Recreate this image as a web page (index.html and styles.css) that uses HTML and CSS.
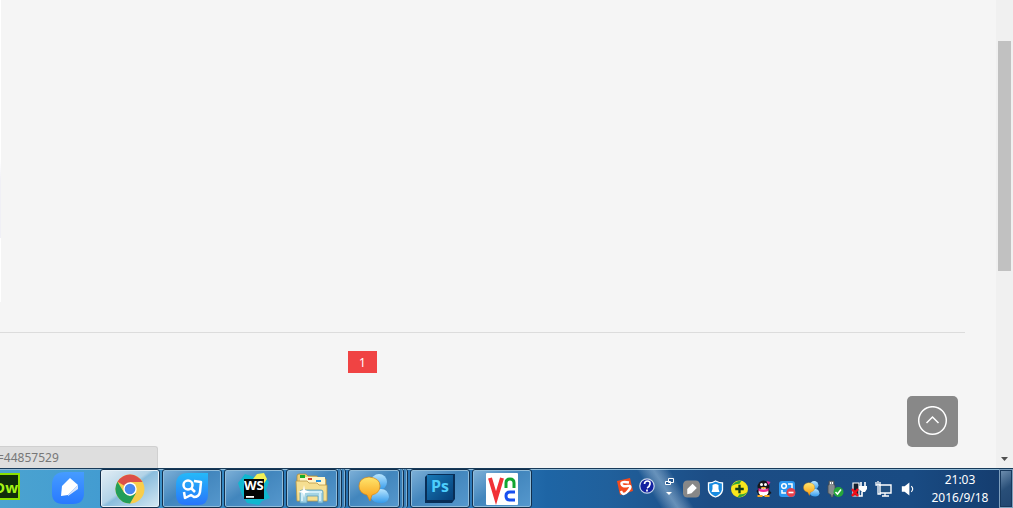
FILE: index.html
```html
<!DOCTYPE html>
<html lang="en">
<head>
<meta charset="utf-8">
<title>Desktop</title>
<link rel="stylesheet" href="styles.css">
</head>
<body>
<div class="viewport">
  <main class="page">
    <div class="edge"></div>
    <section class="list"></section>
    <nav class="pager" aria-label="Pages"><a class="page-link" href="#">1</a></nav>
    <button class="to-top" aria-label="Back to top">
      <svg width="31" height="31" viewBox="0 0 31 31" fill="none" stroke="#fff"><circle cx="15.5" cy="14.5" r="13.8" stroke-width="1.5"/><path d="M9.500 17l6-6 6 6" stroke-width="1.500"/></svg>
    </button>
    <div class="link-status">=44857529</div>
  </main>
  <div class="scrollbar"><div class="thumb"></div><svg class="down" width="7" height="4" viewBox="0 0 7 4"><path d="M0 0h7L3.500 4z" fill="#505050"/></svg></div>
</div>
<footer class="taskbar">
  <svg class="glow" viewBox="0 0 70 40" preserveAspectRatio="none" aria-hidden="true"><defs><linearGradient id="glow" gradientUnits="userSpaceOnUse" x1="20" y1="27" x2="44" y2="12"><stop stop-color="#fff" stop-opacity="0"/><stop offset=".5" stop-color="#cde4f5" stop-opacity=".42"/><stop offset="1" stop-color="#fff" stop-opacity="0"/></linearGradient></defs><path d="M0 0h70v40H0z" fill="url(#glow)"/></svg>
  <div class="pinned">
    <button class="dw" aria-label="Dreamweaver">Dw</button>
    <button class="plain" aria-label="Notes"><svg width="32" height="32" viewBox="0 0 32 32"><defs><linearGradient id="note" x2="0" y2="1"><stop stop-color="#469cff"/><stop offset="1" stop-color="#2879ff"/></linearGradient></defs><path d="M13 0h19v21q0 11-11 11h-10Q0 32 0 21V13Q0 0 13 0z" fill="url(#note)"/><path d="M18 6l8 7-10 10-7 1 1-10z" fill="#fff"/><path d="M16 23l10-10v4L16 24z" fill="#d8e5fb"/></svg></button>
  </div>
  <div class="apps">
    <button class="app active" aria-label="Chrome"><svg width="30" height="30" viewBox="0 0 30 30"><circle cx="15" cy="15" r="14.500" fill="#f8cd4b"/><path d="M15 15L2.500 7.700A14.500 14.500 0 0 1 27.600 8H15z" fill="#dc5048"/><path d="M2.500 7.700L9 18.500 15 22l6-3-6 10.500A14.500 14.500 0 0 1 2.500 7.700z" fill="#239e59"/><circle cx="15" cy="15" r="6.700" fill="#fff"/><circle cx="15" cy="15" r="5.300" fill="#4987ef"/></svg></button>
    <button class="app" aria-label="Sticker"><svg width="32" height="32" viewBox="0 0 32 32"><defs><linearGradient id="sticker" x2="0" y2="1"><stop stop-color="#25b9f9"/><stop offset="1" stop-color="#2875fa"/></linearGradient></defs><path d="M12 0h20v22q0 10-10 10H10Q0 32 0 22V12Q0 0 12 0z" fill="url(#sticker)"/><g fill="none" stroke="#fff" stroke-width="2.500" stroke-linejoin="round"><circle cx="12" cy="12" r="4.500"/><path d="M15 15l4 4M18 8l7 1-1 10q-1 5-6 5l-3-2-6 3-1-6"/></g></svg></button>
    <button class="app" aria-label="WebStorm"><svg width="32" height="32" viewBox="0 0 32 32"><path d="M0 10l7-9 9 3 8-4 7 9-3 8 4 8-8 3-3 4-12-2-5-8z" fill="#10b7cf"/><path d="M15 6l4-5 7-1 3 6-4 6z" fill="#f4ef55"/><path d="M6 6h20v20H6z" fill="#050505"/><path d="M8 23h8v1.800H8z" fill="#fff"/><text x="6" y="17" class="ws">WS</text></svg></button>
    <div class="stack">
      <button class="app" aria-label="Explorer"><svg width="34" height="32" viewBox="0 0 34 32"><path d="M2 8V3q0-2 2-2h7l2 2h9l2 3h7v8H2z" fill="#efd078" stroke="#a98b44" stroke-width=".8"/><path d="M5 4h25v10H5z" fill="#fff5c7"/><path d="M5 2h5v3H5z" fill="#18ad26"/><path d="M13 5h4v2h-4z" fill="#d63d2c"/><path d="M21 7h5v2h-5z" fill="#2894df"/><path d="M1 8h11l2 2h8l2 2h8v16H2z" fill="#f5df91" stroke="#bb9845" stroke-width=".8"/><path d="M7 17h19q2 0 2 2v11h-5v-7H12v7H5V19q0-2 2-2z" fill="#9bd3ec" fill-opacity=".9" stroke="#5c9cb9" stroke-width=".8"/><path d="M7 19h20M7 20v8M25 20v8" stroke="#dff6ff" stroke-width="1.500"/><path d="M9 12l1 5 5 2-5 1-1 5-1-5-5-1 5-2z" fill="#fff"/></svg></button><span class="edge-single"></span><span class="edge-single"></span>
    </div>
    <div class="stack">
      <button class="app" aria-label="Messages"><svg width="32" height="32" viewBox="0 0 32 32"><defs><linearGradient id="buddy" x2="0" y2="1"><stop stop-color="#b8e5ff"/><stop offset="1" stop-color="#339aeb"/></linearGradient><linearGradient id="bubble" x2="0" y2="1"><stop stop-color="#ffe66e"/><stop offset="1" stop-color="#f99b12"/></linearGradient></defs><g id="chat"><circle cx="21" cy="9" r="8" fill="url(#buddy)"/><path d="M13 25q1-9 10-9 7 0 8 8-1 6-8 6-8 0-10-5z" fill="url(#buddy)"/><path d="M1 13q0-8 10-9 11 1 11 9 0 7-8 9l-2 6-3-6Q1 20 1 13z" fill="url(#bubble)" stroke="#db8614" stroke-width=".7"/></g></svg></button><span class="edge-single"></span><span class="edge-single"></span>
    </div>
    <button class="app" aria-label="Photoshop"><svg width="30" height="30" viewBox="0 0 30 30"><defs><linearGradient id="ps" x2="1" y2="1"><stop stop-color="#1879b7"/><stop offset="1" stop-color="#063f78"/></linearGradient></defs><path d="M0 3l3-3h27v25l-3 4H0z" fill="#082e57"/><path d="M2 1h26v25H2z" fill="url(#ps)"/><text x="6" y="18" class="ps">Ps</text></svg></button>
    <button class="app" aria-label="VNC"><svg width="32" height="32" viewBox="0 0 32 32"><rect width="32" height="32" rx="1" fill="#fff"/><g fill="none" stroke-width="3"><path d="M4 5l6 20 6-20" stroke="#f13237" stroke-width="4"/><path d="M20 15v-5q0-4 4-4t4 4v5" stroke="#11a632"/><path d="M29 19h-5q-4 0-4 4t4 4h5" stroke="#174ff0"/></g></svg></button>
  </div>
  <div class="tray">
    <div class="tray-small">
      <svg width="16" height="18" viewBox="0 0 16 18"><path d="M0 3l13-3 3 13-13 4z" fill="#f34b1e"/><path d="M12 4.500Q4 3 4.500 6t6 2 .5 5-7 0" fill="none" stroke="#fff" stroke-width="2.400"/></svg>
      <svg width="16" height="18" viewBox="0 0 16 18"><circle cx="8" cy="8" r="7.200" fill="#1221a1" stroke="#c9d6e9" stroke-width="1.200"/><path d="M5.500 6q0-3 3-3t2.500 3-3 4M8 11.500v2" fill="none" stroke="#fff" stroke-width="1.700"/></svg>
      <svg width="16" height="22" viewBox="0 0 16 22"><path d="M7.500 2.500h5v4h-5zM4.500 5.500h5v3h-5z" fill="#24568f" stroke="#fff"/><path d="M5 16h6l-3 3z" fill="#fff"/></svg>
    </div>
    <div class="tray-icons">
      <svg viewBox="1 1 16 16"><rect x="1" y="1" width="16" height="16" rx="4" fill="#888"/><path d="M10 4l4 4-5 5-4 1V9z" fill="#fff"/></svg>
      <svg viewBox="1 0 16 18"><path d="M9 1q4 2 7 2v7q-1 5-7 7-6-2-7-7V3q4 0 7-2z" fill="#198be0" stroke="#fff" stroke-width="1.300"/><path d="M6 5q3-2 6 0v4l1 3H5l1-3z" fill="#fff"/></svg>
      <svg viewBox="1 1 16 16"><circle cx="9" cy="9" r="8" fill="#f8e51c"/><path d="M1 7Q5 1 11 1L9 4Q4 4 1 7zM17 11q-4 6-10 6l2-3q5 0 8-3z" fill="#31a538"/><path d="M9 5v8M5 9h8" stroke="#123b19" stroke-width="2.200"/></svg>
      <svg viewBox="1 0 16 18"><ellipse cx="9" cy="7" rx="6" ry="6.500" fill="#17171d"/><path d="M2 11l3-3h8l4 5-3 2H4z" fill="#16161c"/><ellipse cx="9" cy="12" rx="5" ry="4" fill="#fff"/><path d="M4 8q5 3 10 0v3q-5 2-10 0zM12 1l4 1-2 3z" fill="#ef2b94"/><circle cx="7" cy="4.500" r="1.500" fill="#fff"/><circle cx="11" cy="4.500" r="1.500" fill="#fff"/><path d="M6 7h6l-3 2zM3 15h5v2H3zM10 15h5v2h-5z" fill="#f6a322"/></svg>
      <svg viewBox="1 1 17 16"><rect x="1" y="1" width="16" height="16" rx="3" fill="#2b98f2"/><g fill="none" stroke="#fff" stroke-width="1.500"><circle cx="6" cy="6" r="2.300"/><path d="M10 4h4v5M4 10v3h4"/></g><circle cx="13" cy="12.500" r="4.500" fill="#e7404b"/><path d="M10.500 12.500h5" stroke="#fff" stroke-width="1.600"/></svg>
      <svg viewBox="0 0 32 32"><use href="#chat"/></svg>
      <svg viewBox="1 0 17 18"><path d="M3 1h5v4h1v8l-2 2v2H5v-2l-3-2V5h1z" fill="#868b8e" stroke="#444c53" stroke-width=".8"/><path d="M4 2h1v2H4zM6 2h1v2H6z" fill="#fff"/><circle cx="12.500" cy="12" r="5" fill="#26a73a"/><path d="M9.500 12l2 2 3.500-4.500" fill="none" stroke="#fff" stroke-width="1.500"/></svg>
      <svg viewBox="1 0 17 18"><path d="M3 3h6v13H3z" fill="#121d2b" stroke="#fff" stroke-width="1.200"/><path d="M9 6h8v3l-2 3h-3L9 9z" fill="#fff"/><path d="M12 12v4H9M11 2v5M15 2v5" fill="none" stroke="#fff" stroke-width="1.600"/><path d="M2 9l6 7M8 9l-6 7" stroke="#f20d19" stroke-width="2.500"/></svg>
      <svg viewBox="1 0 17 18"><path d="M6 5h11v8H6z" fill="#235180" stroke="#fff" stroke-width="1.400"/><path d="M11 13v3M8 16h7M4 6v8h3M2 2v3h4V2M4 1v4" fill="none" stroke="#fff" stroke-width="1.300"/></svg>
      <svg viewBox="0 0 18 18"><path d="M3 6h3l5-4v14l-5-4H3z" fill="#fff"/><path d="M13 6q3 3 0 6" fill="none" stroke="#fff" stroke-width="1.200"/></svg>
    </div>
    <time class="clock" datetime="2016-09-18T21:03"><span>21:03</span><span>2016/9/18</span></time>
    <button class="show-desktop" aria-label="Show desktop"></button>
  </div>
</footer>
</body>
</html>
```

FILE: styles.css
```css
* { box-sizing: border-box; }
body {
  margin: 0;
  height: 100vh;
  display: flex;
  flex-direction: column;
  overflow: hidden;
  background: #f5f5f5;
  font-family: "Noto Sans", sans-serif;
}
button { border: 0; padding: 0; background: none; }
svg { display: block; flex: none; }
.viewport { flex: 1; display: flex; min-height: 0; }
.page {
  position: relative;
  flex: 1;
  display: flex;
  flex-direction: column;
}
.edge {
  position: absolute;
  left: 0;
  top: 0;
  width: 1px;
  height: 302px;
  background: linear-gradient(#fff 160px, #f0f0f6 180px 238px, #fff 238px);
}
.list { flex: 1; margin-right: 31px; border-bottom: 1px solid #dcdcdc; }
.pager { height: 135px; padding: 18px 0 0 348px; }
.page-link {
  display: flex;
  align-items: center;
  justify-content: center;
  width: 29px;
  height: 22px;
  background: #f04343;
  color: #fff;
  font-size: 12px;
  text-decoration: none;
}
.to-top {
  position: absolute;
  right: 38px;
  bottom: 21px;
  width: 51px;
  height: 51px;
  display: grid;
  place-items: center;
  border-radius: 5px;
  background: #888;
}
.link-status {
  position: absolute;
  left: -4px;
  bottom: 0;
  width: 162px;
  height: 22px;
  border: 1px solid #d0d0d0;
  border-bottom: 0;
  border-radius: 0 3px 0 0;
  background: #dedede;
  color: #777;
  font-size: 12px;
  line-height: 22px;
}
.scrollbar {
  width: 17px;
  padding: 41px 2px 7px;
  display: flex;
  flex-direction: column;
  align-items: center;
  justify-content: space-between;
  background: #f0f0f0;
}
.thumb { width: 100%; height: 230px; background: #c1c1c1; }
.taskbar {
  position: relative;
  height: 40px;
  display: flex;
  border-top: 1px solid #183b5a;
  box-shadow: inset 0 1px #91bbd7;
  background: linear-gradient(90deg, #4ba3d0, #439cd1 10%, #2873b2 34%, #2d7bbb 48%, #1e65a5 54%, #20609c 60%, #1c4d85 70%, #194b83 90%, #143b6c);
}
.glow { position: absolute; right: 310px; top: 0; width: 70px; height: 100%; }
.pinned { width: 100px; display: flex; align-items: center; gap: 32px; }
.dw {
  width: 20px;
  height: 27px;
  margin-bottom: 4px;
  display: flex;
  align-items: center;
  justify-content: flex-end;
  overflow: hidden;
  border: 2px solid #8be000;
  border-left: 0;
  background: #102d0b;
  color: #a4f516;
  font: bold 15px "Open Sans", sans-serif;
}
.plain { margin-bottom: 2px; }
.apps { display: flex; gap: 2px; }
.app {
  width: 60px;
  height: 39px;
  display: grid;
  place-items: center;
  border: 1px solid #122f4c;
  border-radius: 3px;
  box-shadow: inset 0 0 0 1px #91bddb;
  background: linear-gradient(145deg, #7fb1d8, #4286bd 45%, #5698cd);
}
.active {
  box-shadow: inset 0 0 0 1px #e5f1f8;
  background: linear-gradient(145deg, #e3eef5, #b2d3e7 45%, #8abddd 50%, #d5e8f2);
}
.stack { display: flex; width: 60px; }
.stack .app { width: 52px; }
.edge-single {
  width: 4px;
  height: 39px;
  border-right: 1px solid #122f4c;
  border-radius: 0 3px 3px 0;
  box-shadow: inset -1px 0 #80b0d3;
  background: #397fb7;
}
.ws { font: bold 13px "Open Sans", sans-serif; fill: #fff; }
.ps { font: bold 16px "Open Sans", sans-serif; fill: #4dcdfc; }
.tray {
  position: relative;
  margin-left: auto;
  display: flex;
  align-items: center;
}
.tray-small {
  display: flex;
  align-items: center;
  gap: 6px;
  margin-right: 6px;
  padding-bottom: 4px;
}
.tray-icons { display: flex; gap: 7px; margin-right: 8px; }
.tray-icons svg { width: 17px; height: 18px; }
.clock {
  width: 72px;
  margin-right: 3px;
  display: flex;
  flex-direction: column;
  align-items: center;
  color: #fff;
  font-size: 12px;
  line-height: 18px;
}
.show-desktop {
  width: 14px;
  height: 39px;
  border: 1px solid #7fa0be;
  box-shadow: inset 0 0 0 1px #17385c;
  background: linear-gradient(145deg, #7292b2, #294f78 50%, #214570);
}
```
